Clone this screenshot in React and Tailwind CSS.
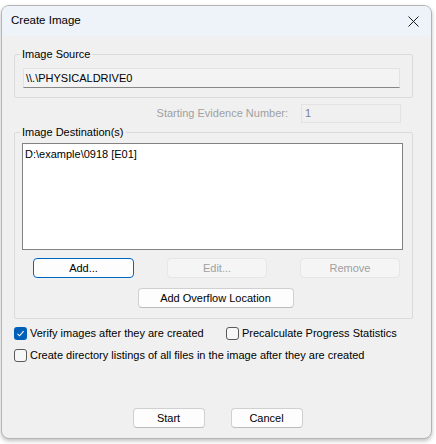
import React from "react";

const font = { fontFamily: '"Liberation Sans", Arial, sans-serif' };

function Btn({ children, className = "", disabled = false, primary = false }) {
  return (
    <div
      className={
        "flex h-[20px] items-center justify-center whitespace-nowrap rounded-[4px] border text-[11px] leading-none " +
        (primary
          ? "border-[#0067c0] bg-[#fdfdfd] text-black "
          : disabled
          ? "border-[#e6e6e6] bg-[#f5f5f5] text-[#a0a0a0] "
          : "border-[#d0d0d0] border-b-[#bcbcbc] bg-[#fdfdfd] text-black ") +
        className
      }
    >
      {children}
    </div>
  );
}

function Check({ checked }) {
  return checked ? (
    <div className="flex h-[13px] w-[13px] shrink-0 items-center justify-center rounded-[3px] bg-[#005fb8]">
      <svg width="9" height="9" viewBox="0 0 9 9">
        <path d="M1.5 4.8 L3.6 6.8 L7.6 2.2" fill="none" stroke="white" strokeWidth="1.1" />
      </svg>
    </div>
  ) : (
    <div className="h-[13px] w-[13px] shrink-0 rounded-[3px] border border-[#5a5a5a] bg-[#f7f7f7]" />
  );
}

export default function App() {
  return (
    <div className="h-[444px] w-[436px] overflow-hidden bg-white" style={font}>
      <div className="ml-[1px] mt-[5px] flex h-[434px] w-[431px] flex-col overflow-hidden rounded-[8px] border border-[#b4b4b4] bg-[#f0f0f0] shadow-[0_2px_4px_rgba(0,0,0,0.25)]">
        {/* title bar */}
        <div className="flex h-[30px] shrink-0 items-center justify-between bg-[#eef2f9] pl-[9px] pr-[12px]">
          <span className="text-[11.5px] leading-none text-black">Create Image</span>
          <svg width="11" height="11" viewBox="0 0 11 11">
            <path d="M0.5 0.5 L10.5 10.5 M10.5 0.5 L0.5 10.5" stroke="#1a1a1a" strokeWidth="1" />
          </svg>
        </div>

        {/* body */}
        <div className="flex flex-1 flex-col whitespace-nowrap px-[12px]">
          <fieldset className="mt-[10px] w-[399px] rounded-[2px] border border-[#dadada] pb-[9px]">
            <legend className="ml-[5px] px-[2px] text-[11px] leading-[16px] text-black">Image Source</legend>
            <div className="ml-[8px] mt-[6px] flex h-[20px] w-[377px] items-center border border-[#e2e2e2] border-b-[#878787] bg-[#f3f3f3] pl-[2px] text-[11px] leading-none text-black">
              \\.\PHYSICALDRIVE0
            </div>
          </fieldset>

          <div className="mt-[6px] flex w-[399px] items-center justify-end pr-[12px]">
            <span className="mr-[13px] text-[11px] leading-none text-[#a0a0a0]">Starting Evidence Number:</span>
            <div className="flex h-[19px] w-[100px] items-center border border-[#e3e3e3] bg-[#f0f0f0] pl-[3px] text-[11px] leading-none text-[#7a7f8c]">
              1
            </div>
          </div>

          <fieldset className="mt-[1px] w-[399px] rounded-[2px] border border-[#dadada] pb-[10px]">
            <legend className="ml-[5px] px-[2px] text-[11px] leading-[16px] text-black">Image Destination(s)</legend>
            <div className="ml-[7px] mt-[3px] h-[107px] w-[381px] border border-[#828282] bg-white px-[2px] pt-[2px] text-[11px] leading-[16px] text-black">
              D:\example\0918 [E01]
            </div>
            <div className="mt-[8px] flex pl-[18px]">
              <Btn primary className="w-[101px]">Add...</Btn>
              <Btn disabled className="ml-[33px] w-[100px]">Edit...</Btn>
              <Btn disabled className="ml-[33px] w-[100px]">Remove</Btn>
            </div>
            <div className="mt-[10px] flex justify-center pl-[4px]">
              <Btn className="w-[156px]">Add Overflow Location</Btn>
            </div>
          </fieldset>

          <div className="mt-[8px] flex items-center text-[11px] leading-none text-black">
            <Check checked />
            <span className="ml-[3px] w-[196px]">Verify images after they are created</span>
            <Check />
            <span className="ml-[3px]">Precalculate Progress Statistics</span>
          </div>
          <div className="mt-[9px] flex items-center text-[11px] leading-none text-black">
            <Check />
            <span className="ml-[3px]">Create directory listings of all files in the image after they are created</span>
          </div>

          <div className="mt-[46px] flex justify-center gap-[26px] pl-[2px]">
            <Btn className="w-[72px]">Start</Btn>
            <Btn className="w-[72px]">Cancel</Btn>
          </div>
        </div>
      </div>
    </div>
  );
}
